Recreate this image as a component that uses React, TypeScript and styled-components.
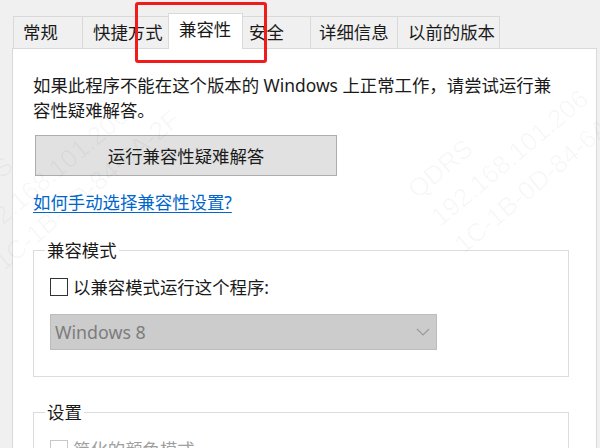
import styled, { createGlobalStyle } from 'styled-components';

/// UTILS BELOW
/** ***************************************************** */
const FONT = `"Noto Sans", "Noto Sans CJK SC", sans-serif`;

const TABS = [
  { label: '常规', width: 70, pad: 9 },
  { label: '快捷方式', width: 87, pad: 10 },
  { label: '兼容性', width: 75, pad: 10, active: true },
  { label: '安全', width: 69, pad: 6 },
  { label: '详细信息', width: 88, pad: 8 },
  { label: '以前的版本', width: 103, pad: 10 },
];

const GlobalStyle = createGlobalStyle`
  html, body {
    margin: 0;
    padding: 0;
    background: #f0f0f0;
  }
`;

const Window = styled.div`
  position: relative;
  width: 600px;
  height: 448px;
  overflow: hidden;
  background: #f0f0f0;
  font-family: ${FONT};
  color: #1a1a1a;
`;

const TabStrip = styled.div`
  display: flex;
  align-items: flex-end;
  height: 48px;
  padding-left: 13px;
  box-sizing: border-box;
`;

const Tab = styled.div<{ $width: number; $pad: number; $active?: boolean }>`
  position: relative;
  box-sizing: border-box;
  width: ${(p) => p.$width}px;
  height: ${(p) => (p.$active ? 36 : 32)}px;
  margin-right: -1px;
  margin-bottom: ${(p) => (p.$active ? -1 : 0)}px;
  padding-left: ${(p) => p.$pad}px;
  padding-top: 3px;
  border: 1px solid #d9d9d9;
  border-bottom: 0;
  background: ${(p) => (p.$active ? '#ffffff' : '#f0f0f0')};
  z-index: ${(p) => (p.$active ? 1 : 0)};
  font-size: 17.4px;
  line-height: 25px;
  white-space: nowrap;
`;

const Panel = styled.div`
  box-sizing: border-box;
  width: 585px;
  height: 420px;
  margin-left: 12px;
  padding: 24px 0 0 20px;
  border: 1px solid #d9d9d9;
  background: #ffffff;
`;

const Intro = styled.p`
  margin: 0;
  font-size: 17.4px;
  line-height: 25px;
`;

const Button = styled.div`
  display: flex;
  align-items: center;
  justify-content: center;
  box-sizing: border-box;
  width: 302px;
  height: 41px;
  margin: 12px 0 0 2px;
  border: 1px solid #adadad;
  background: #e1e1e1;
  font-size: 17.4px;
`;

const Link = styled.a`
  display: inline-block;
  margin-top: 14px;
  color: #0066cc;
  text-decoration: underline;
  text-underline-offset: 3px;
  font-size: 17.4px;
  line-height: 25px;
`;

const Group = styled.fieldset<{ $gap: number }>`
  box-sizing: border-box;
  width: 536px;
  margin: ${(p) => p.$gap}px 0 0 0;
  padding: 14px 16px 26px 16px;
  border: 1px solid #dcdcdc;
`;

const Legend = styled.legend`
  margin-left: -5px;
  padding: 0 2px;
  font-size: 17.4px;
  line-height: 20px;
`;

const CheckRow = styled.div<{ $disabled?: boolean }>`
  display: flex;
  align-items: center;
  gap: 5px;
  height: 25px;
  font-size: 17.4px;
  color: ${(p) => (p.$disabled ? '#a0a0a0' : '#1a1a1a')};
`;

const Box = styled.span<{ $disabled?: boolean }>`
  box-sizing: border-box;
  width: 18px;
  height: 18px;
  border: 1.5px solid ${(p) => (p.$disabled ? '#c8c8c8' : '#333333')};
  background: #ffffff;
`;

const Select = styled.div`
  display: flex;
  align-items: center;
  justify-content: space-between;
  box-sizing: border-box;
  width: 387px;
  height: 36px;
  margin-top: 15px;
  padding: 0 6px 0 4px;
  border: 1px solid #bcbcbc;
  background: #cccccc;
  color: #7c7c7c;
  font-size: 17.8px;
`;

const Highlight = styled.div`
  position: absolute;
  left: 135px;
  top: 2px;
  width: 132px;
  height: 61px;
  box-sizing: border-box;
  border: 3px solid #f01c1c;
  border-radius: 3px;
  z-index: 5;
`;

const Watermark = styled.div<{ $x: number; $y: number }>`
  position: absolute;
  left: ${(p) => p.$x}px;
  top: ${(p) => p.$y}px;
  transform: rotate(-40deg);
  transform-origin: 0 0;
  pointer-events: none;
  font-family: "Liberation Sans", sans-serif;
  font-size: 26px;
  line-height: 36px;
  color: rgba(0, 0, 0, 0.035);
  white-space: pre;
  z-index: 4;
`;

///  COMPONENT BELOW
/** ***************************************************** */
export default function App() {
  return (
    <Window>
      <GlobalStyle />

      <TabStrip>
        {TABS.map((t) => (
          <Tab key={t.label} $width={t.width} $pad={t.pad} $active={t.active}>
            {t.label}
          </Tab>
        ))}
      </TabStrip>

      <Panel>
        <Intro>
          如果此程序不能在这个版本的 Windows 上正常工作，请尝试运行兼
          <br />
          容性疑难解答。
        </Intro>

        <Button>运行兼容性疑难解答</Button>

        <Link>如何手动选择兼容性设置?</Link>

        <Group $gap={25}>
          <Legend>兼容模式</Legend>
          <CheckRow>
            <Box />
            以兼容模式运行这个程序:
          </CheckRow>
          <Select>
            Windows 8
            <svg width="14" height="8" viewBox="0 0 14 8">
              <polyline points="1,1 7,7 13,1" fill="none" stroke="#9a9a9a" strokeWidth="1.2" />
            </svg>
          </Select>
        </Group>

        <Group $gap={25}>
          <Legend>设置</Legend>
          <CheckRow $disabled>
            <Box $disabled />
            简化的颜色模式
          </CheckRow>
        </Group>
      </Panel>

      <Highlight />

      <Watermark $x={400} $y={179}>{'QDRS\n192.168.101.206\n1C-1B-0D-84-6A-2F'}</Watermark>
      <Watermark $x={-60} $y={196}>{'QDRS\n192.168.101.206\n1C-1B-0D-84-6A-2F'}</Watermark>
    </Window>
  );
}
